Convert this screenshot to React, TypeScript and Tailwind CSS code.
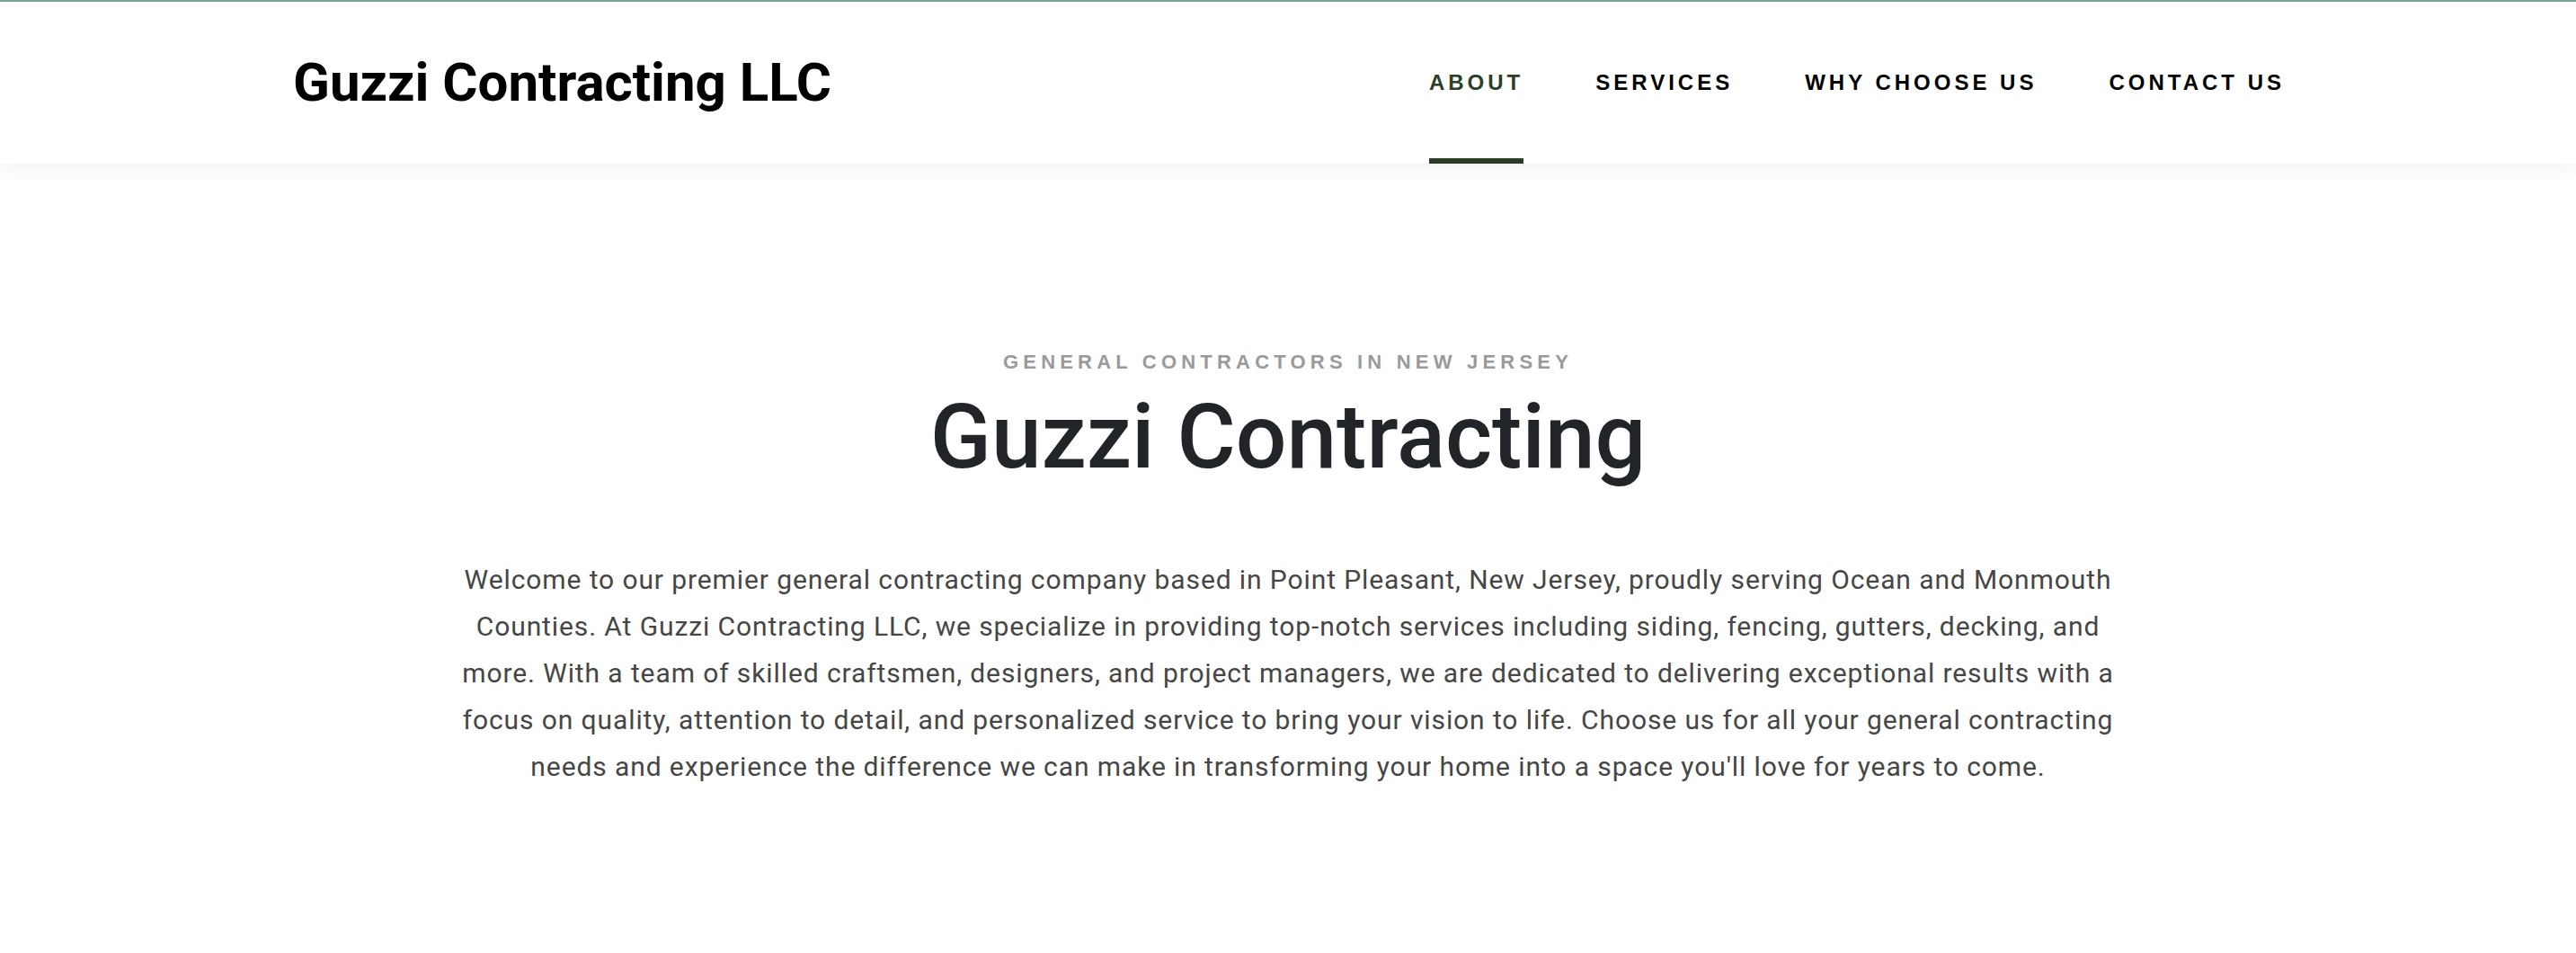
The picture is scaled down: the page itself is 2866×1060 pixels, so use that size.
const navItems = [
  { label: "About", active: true },
  { label: "Services", active: false },
  { label: "Why Choose Us", active: false },
  { label: "Contact Us", active: false },
]

function Header() {
  return (
    <header className="relative z-10 h-[182px] border-t-2 border-[#77a399] bg-white shadow-[0_6px_20px_rgba(0,0,0,0.05)]">
      <div className="flex h-full items-center justify-between pl-[326px] pr-[324px]">
        <a className="text-[60px] font-bold leading-none text-black font-['Roboto',sans-serif]">
          Guzzi Contracting LLC
        </a>
        <nav className="h-full">
          <ul className="flex h-full gap-[80px]">
            {navItems.map((item) => (
              <li key={item.label} className="relative flex h-full items-center">
                <a
                  className={
                    item.active
                      ? "text-[24px] font-bold uppercase leading-none tracking-[4px] text-[#2b4028] font-['Liberation_Sans',Arial,sans-serif]"
                      : "text-[24px] font-bold uppercase leading-none tracking-[4px] text-black font-['Liberation_Sans',Arial,sans-serif]"
                  }
                >
                  {item.label}
                </a>
                {item.active && (
                  <span className="absolute bottom-0 left-0 h-[6px] w-full bg-[#2b3c26]" />
                )}
              </li>
            ))}
          </ul>
        </nav>
      </div>
    </header>
  )
}

function About() {
  return (
    <section className="flex flex-col items-center pt-[210px] pb-[160px] text-center">
      <p className="text-[22px] font-bold uppercase leading-none tracking-[5.2px] text-[#9a9a9a] font-['Liberation_Sans',Arial,sans-serif]">
        General Contractors in New Jersey
      </p>
      <h1 className="mt-[22px] text-[100px] font-medium leading-none text-[#212529] font-['Roboto',sans-serif]">
        Guzzi Contracting
      </h1>
      <p className="mt-[83px] max-w-[1860px] text-[30px] leading-[52px] tracking-[0.9px] text-[#464646] font-['Roboto',sans-serif]">
        Welcome to our premier general contracting company based in Point Pleasant, New Jersey, proudly serving Ocean and
        Monmouth Counties. At Guzzi Contracting LLC, we specialize in providing top-notch services including siding,
        fencing, gutters, decking, and more. With a team of skilled craftsmen, designers, and project managers, we are
        dedicated to delivering exceptional results with a focus on quality, attention to detail, and personalized service
        to bring your vision to life. Choose us for all your general contracting needs and experience the difference we can
        make in transforming your home into a space you'll love for years to come.
      </p>
    </section>
  )
}

export default function App() {
  return (
    <div className="min-h-[1060px] bg-white">
      <Header />
      <About />
    </div>
  )
}
